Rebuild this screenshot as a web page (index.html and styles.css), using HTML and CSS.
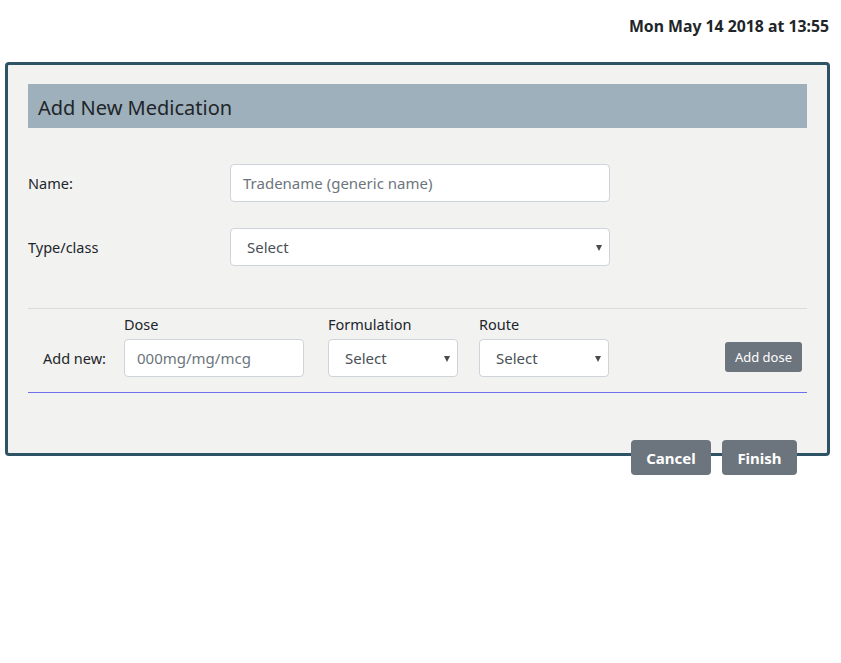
FILE: index.html
```html
<!DOCTYPE html>
<html>
<head>
<meta charset="utf-8">
<link rel="stylesheet" href="styles.css">
</head>
<body>
<div class="topbar"><span class="date">Mon May 14 2018 at 13:55</span></div>
<div class="card">
  <h2 class="card-title">Add New Medication</h2>
  <div class="form-row row-name">
    <label class="row-label">Name:</label>
    <div class="field wide"><span class="placeholder">Tradename (generic name)</span></div>
  </div>
  <div class="form-row row-type">
    <label class="row-label">Type/class</label>
    <div class="field wide select"><span class="value">Select</span><span class="caret"></span></div>
  </div>
  <div class="dose-section">
    <span class="addnew">Add new:</span>
    <div class="group g-dose">
      <label class="group-label">Dose</label>
      <div class="field dose"><span class="placeholder">000mg/mg/mcg</span></div>
    </div>
    <div class="group g-form">
      <label class="group-label">Formulation</label>
      <div class="field small select"><span class="value">Select</span><span class="caret"></span></div>
    </div>
    <div class="group g-route">
      <label class="group-label">Route</label>
      <div class="field small select"><span class="value">Select</span><span class="caret"></span></div>
    </div>
    <button class="btn btn-sm">Add dose</button>
  </div>
</div>
<div class="footer">
  <button class="btn btn-lg btn-cancel">Cancel</button>
  <button class="btn btn-lg btn-finish">Finish</button>
</div>
</body>
</html>
```
FILE: styles.css
```css
* { box-sizing: border-box; }
body {
  margin: 0;
  font-family: "Noto Sans", "Open Sans", sans-serif;
  font-size: 15px;
  color: #212529;
  background: #fff;
}
.topbar {
  display: flex;
  justify-content: flex-end;
  padding: 15px 12px 0 0;
  height: 62px;
}
.date {
  font-weight: bold;
  font-size: 15.8px;
  line-height: 22px;
  color: #212529;
}
.card {
  margin-left: 5px;
  width: 825px;
  height: 394px;
  border: 3px solid #2d5364;
  border-radius: 4px;
  background: #f2f2f1;
  padding: 19px 20px 0 20px;
}
.card-title {
  margin: 0;
  height: 44px;
  background: #9eb0bb;
  font-size: 20px;
  font-weight: normal;
  line-height: 44px;
  padding: 2px 0 0 10px;
  color: #212529;
}
.form-row {
  display: flex;
  align-items: center;
}
.row-name { margin-top: 36px; }
.row-type { margin-top: 26px; }
.row-label {
  width: 202px;
  font-size: 14.5px;
}
.field {
  height: 38px;
  background: #fff;
  border: 1px solid #ced4da;
  border-radius: 4px;
  display: flex;
  align-items: center;
  padding-left: 12px;
  position: relative;
  font-size: 15px;
}
.field.wide { width: 380px; }
.field.select { padding-left: 16px; }
.placeholder { color: #6c757d; }
.value { color: #495057; }
.caret {
  position: absolute;
  right: 7px;
  top: 16px;
  width: 0;
  height: 0;
  border-left: 3px solid transparent;
  border-right: 3px solid transparent;
  border-top: 6px solid #4a4a4a;
}
.dose-section {
  margin-top: 42px;
  border-top: 1px solid #dcdcdc;
  border-bottom: 1px solid #7070ee;
  height: 85px;
  display: flex;
  align-items: flex-end;
  padding-bottom: 15px;
  padding-left: 15px;
}
.addnew {
  width: 81px;
  height: 38px;
  line-height: 38px;
  font-size: 14.5px;
}
.group { display: flex; flex-direction: column; }
.group-label {
  font-size: 14.5px;
  line-height: 20px;
  margin-bottom: 5px;
}
.field.dose { width: 180px; }
.field.small { width: 130px; }
.g-form { margin-left: 24px; }
.g-route { margin-left: 21px; }
.btn {
  background: #6c757d;
  color: #fff;
  border: none;
  border-radius: 3px;
  font-family: "Noto Sans", "Open Sans", sans-serif;
  cursor: pointer;
  padding: 0;
}
.btn-sm {
  margin-left: auto;
  margin-right: 5px;
  margin-bottom: 5px;
  height: 30px;
  width: 77px;
  font-size: 13px;
}
.footer {
  display: flex;
  justify-content: flex-end;
  gap: 11px;
  width: 797px;
  margin-top: -16px;
}
.btn-lg {
  height: 35px;
  font-size: 15px;
  font-weight: bold;
  border-radius: 4px;
}
.btn-cancel { width: 80px; }
.btn-finish { width: 75px; }
```
